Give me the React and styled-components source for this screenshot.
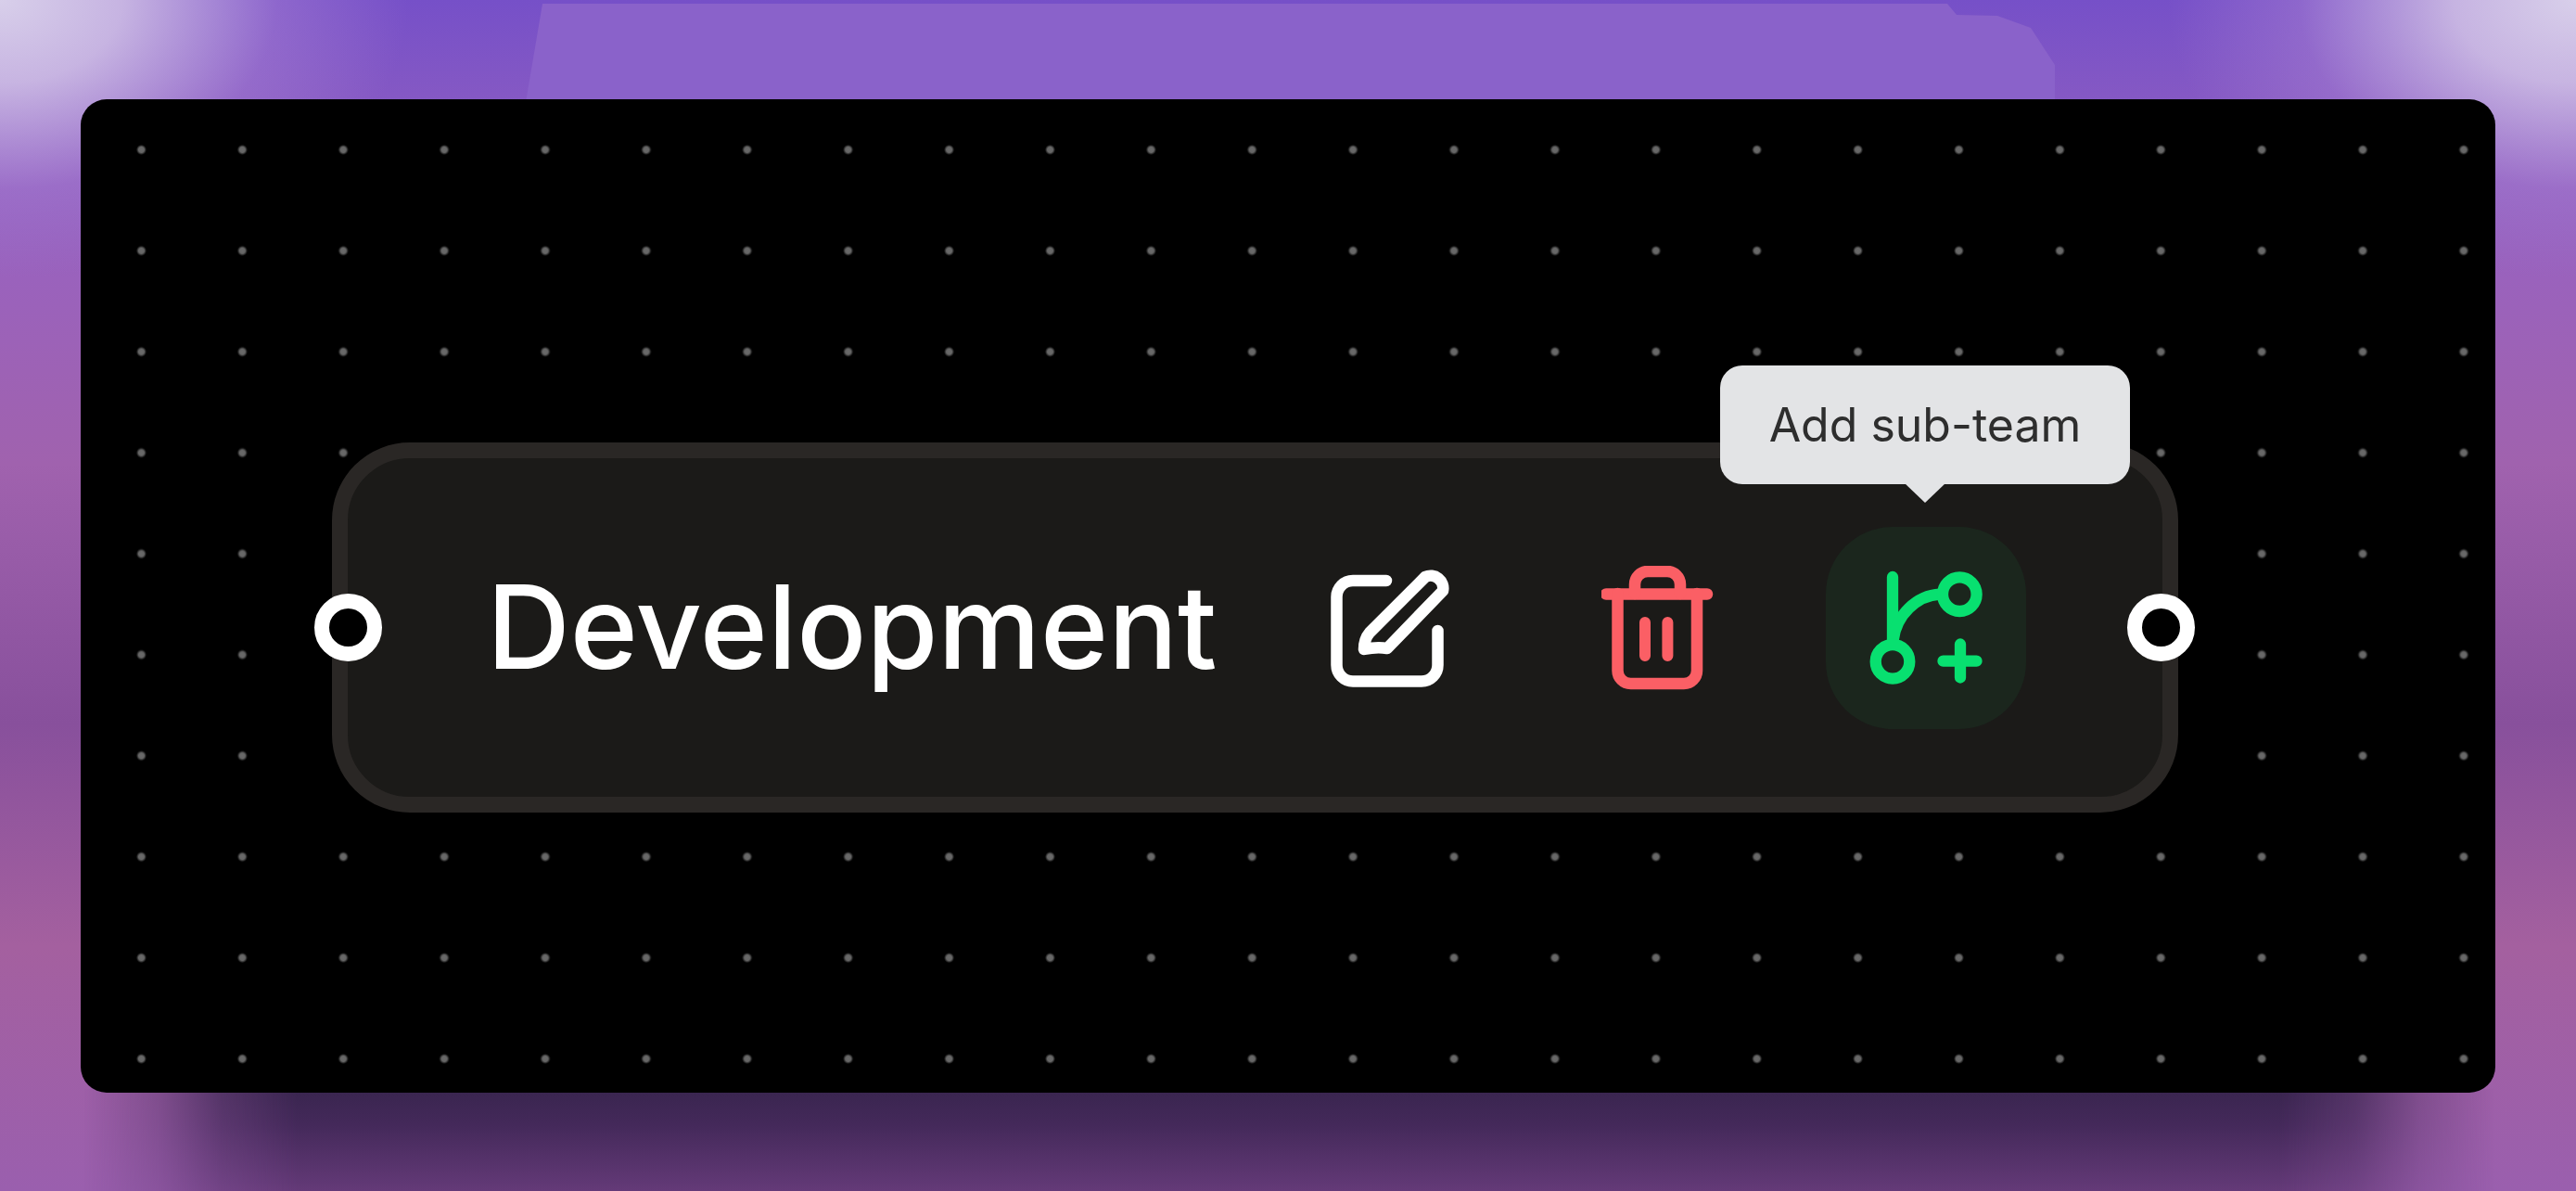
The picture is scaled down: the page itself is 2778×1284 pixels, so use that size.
import React from 'react'
import styled, { createGlobalStyle } from 'styled-components'

const GlobalStyle = createGlobalStyle`
    html, body {
        margin: 0;
        padding: 0;
        background: #7d4d9c;
    }
`
const Page = styled.div`
    position: relative;
    box-sizing: border-box;
    width: 2778px;
    height: 1284px;
    overflow: hidden;
    padding: 107px 87px 106px;
    background:
        radial-gradient(ellipse 440px 300px at 0px 0px, #d8cfea 0%, rgba(205,188,228,0.92) 30%, rgba(170,130,210,0.45) 68%, rgba(160,120,205,0) 100%),
        radial-gradient(ellipse 440px 300px at 2778px 0px, #d8cfea 0%, rgba(205,188,228,0.92) 30%, rgba(170,130,210,0.45) 68%, rgba(160,120,205,0) 100%),
        linear-gradient(180deg, #7650c8 0, #8458c4 100px, #9a62bc 300px, #a062ae 500px, #88509c 780px, #a4609f 1020px, #9a5fae 1284px);

    /* dark smear under the panel */
    &::before {
        content: '';
        position: absolute;
        left: 0;
        right: 0;
        bottom: 0;
        height: 110px;
        background: linear-gradient(180deg, #39254f 0%, #44295a 35%, #643a78 100%);
        -webkit-mask-image: linear-gradient(90deg, transparent 90px, rgba(0,0,0,0.3) 170px, rgba(0,0,0,0.75) 240px, #000 320px, #000 2460px, rgba(0,0,0,0.75) 2540px, rgba(0,0,0,0.3) 2610px, transparent 2690px);
        mask-image: linear-gradient(90deg, transparent 90px, rgba(0,0,0,0.3) 170px, rgba(0,0,0,0.75) 240px, #000 320px, #000 2460px, rgba(0,0,0,0.75) 2540px, rgba(0,0,0,0.3) 2610px, transparent 2690px);
    }

    /* lighter patch above the panel */
    &::after {
        content: '';
        position: absolute;
        left: 0;
        top: 0;
        width: 2778px;
        height: 110px;
        background: #8a62ca;
        clip-path: polygon(585px 4px, 2100px 4px, 2110px 16px, 2154px 17px, 2190px 30px, 2216px 70px, 2216px 110px, 567px 110px);
    }
`
const Canvas = styled.div`
    position: relative;
    z-index: 1;
    box-sizing: border-box;
    width: 2604px;
    height: 1071px;
    padding: 370px 342px 302px 271px;
    border-radius: 28px;
    background-color: #000;
    background-image: radial-gradient(circle at center, #6a6a6a 0, #666 3px, transparent 5.5px);
    background-size: 108.9px 108.9px;
    background-position: 11px 0;
`
const Node = styled.div`
    position: relative;
    box-sizing: border-box;
    display: flex;
    align-items: center;
    width: 1991px;
    height: 399px;
    padding: 0 147px 0 150px;
    border: 17px solid #2a2725;
    border-radius: 84px;
    background: #1b1a18;
`
const Handle = styled.span`
    position: absolute;
    top: 146px;
    ${p => (p.$side === 'left' ? 'left: -36px;' : 'right: -35px;')}
    box-sizing: border-box;
    width: 73px;
    height: 73px;
    border: 16.5px solid #fff;
    border-radius: 50%;
    background: #000;
`
const Title = styled.div`
    width: 866px;
    font-family: Inter, "Liberation Sans", sans-serif;
    font-size: 124.5px;
    font-weight: 500;
    line-height: 1;
    color: #fff;
    white-space: nowrap;
`
const Actions = styled.div`
    display: flex;
    align-items: center;
    gap: 73px;
`
const ActionButton = styled.div`
    position: relative;
    display: flex;
    align-items: center;
    justify-content: center;
    width: 216px;
    height: 218px;
    border-radius: 72px;
    background: ${p => p.$bg || 'transparent'};
`
const Tooltip = styled.div`
    position: absolute;
    left: -114px;
    top: -174px;
    box-sizing: border-box;
    display: flex;
    align-items: center;
    justify-content: center;
    width: 442px;
    height: 128px;
    border-radius: 24px;
    background: #e3e4e6;
    font-family: Inter, "Liberation Sans", sans-serif;
    font-size: 50px;
    color: #2e2e2e;
    white-space: nowrap;

    &::after {
        content: '';
        position: absolute;
        left: 199px;
        bottom: -20px;
        border-left: 22px solid transparent;
        border-right: 22px solid transparent;
        border-top: 21px solid #e3e4e6;
    }
`

const EditIcon = () => (
    <svg width="128" height="128" viewBox="0 0 128 128" fill="none" stroke="#fff" strokeWidth="12.5" strokeLinecap="round" strokeLinejoin="round">
        <path d="M60 13H24a17.5 17.5 0 0 0-17.5 17.5V104a17.5 17.5 0 0 0 17.5 17.5H98a17.5 17.5 0 0 0 17.5-17.5V67" />
        <path d="M36 87Q36 76 42 69L102 9A13.5 13.5 0 0 1 121 24L61 86Q50 84 36 87Z" />
    </svg>
)

const TrashIcon = () => (
    <svg width="122" height="134" viewBox="2 0 122 134" fill="none" stroke="#fb5f65" strokeWidth="12.5" strokeLinecap="round" strokeLinejoin="round">
        <path d="M7 30.5H116" />
        <path d="M38 30V20a14 14 0 0 1 14-14h21a14 14 0 0 1 14 14V30" />
        <path d="M19.5 30V113a14 14 0 0 0 14 14h57.5a14 14 0 0 0 14-14V30" />
        <path strokeWidth="12" d="M49 61V97M73.4 61V97" />
    </svg>
)

const BranchIcon = () => (
    <svg width="122" height="123" viewBox="0 0 122 123" fill="none" stroke="#08e070" strokeWidth="12.3" strokeLinecap="round">
        <path d="M25 7V75" />
        <path d="M25.7 75C29 48 51 27 76 25.7" />
        <circle cx="97.3" cy="25.7" r="18.3" />
        <circle cx="25" cy="98.3" r="18.3" />
        <path d="M98 79.5V115.5M79.5 97.7H115.5" />
    </svg>
)

const App = () => {
    return (
        <Page>
            <GlobalStyle />
            <Canvas>
                <Node>
                    <Handle $side="left" />
                    <Title>Development</Title>
                    <Actions>
                        <ActionButton><EditIcon /></ActionButton>
                        <ActionButton><TrashIcon /></ActionButton>
                        <ActionButton $bg="#1b261d">
                            <BranchIcon />
                            <Tooltip>Add sub-team</Tooltip>
                        </ActionButton>
                    </Actions>
                    <Handle $side="right" />
                </Node>
            </Canvas>
        </Page>
    )
}

export default App
